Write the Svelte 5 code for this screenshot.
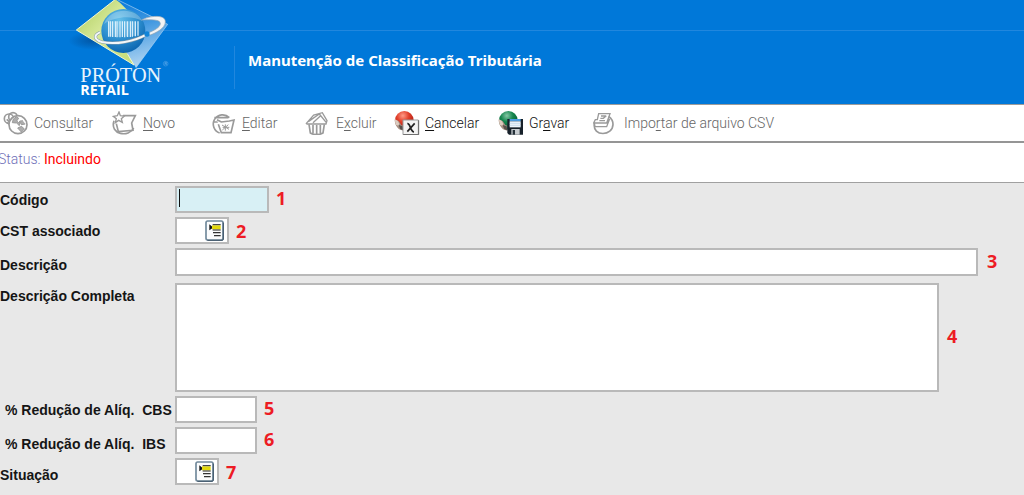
<script>
  let codigo = $state('');
  let cst = $state('');
  let descricao = $state('');
  let completa = $state('');
  let cbs = $state('');
  let ibs = $state('');
  let situacao = $state('');
</script>

{#snippet listIcon()}
  <svg class="list-icon" viewBox="0 0 57 63" aria-hidden="true">
    <rect x="3" y="3" width="51" height="57" rx="5" fill="#fbfcfd" stroke="#71899b" stroke-width="5" />
    <path d="M55 8v49q0 4-4 4H7" fill="none" stroke="#3d5468" stroke-width="3" />
    <path d="M13 13v18l9-6v-5z" fill="#111" />
    <path d="M21 22h26" stroke="#e2d80c" stroke-width="12" />
    <path d="M23 14h24M23 30h24" stroke="#222" stroke-width="3" />
    <path d="M24 38h23M27 47h20" stroke="#333" stroke-width="4" />
  </svg>
{/snippet}

{#snippet ball(id, light, mid, dark)}
  <defs>
    <radialGradient id={id} cx=".42" cy=".25" r=".72">
      <stop offset="0" stop-color={light} />
      <stop offset=".45" stop-color={mid} />
      <stop offset="1" stop-color={dark} />
    </radialGradient>
  </defs>
  <circle cx="31" cy="28" r="28" fill="url(#{id})" />
  <path d="M2 26l12 4 8 12 6 2v15l-13-4Q2 42 2 26z" fill="#a58e81" />
  <path d="M2 24l9 5 5 9-3 6-8-3z" fill="#dccbbf" />
  <path d="M14 42l12 4 2 12-9-3z" fill="#57504b" />
{/snippet}

<main>
  <header>
    <svg class="logo" viewBox="0 0 390 312" role="img" aria-label="Próton Retail">
      <defs>
        <linearGradient id="green" x1="0" y1="0" x2="1" y2="1">
          <stop offset="0" stop-color="#a9c957" />
          <stop offset=".45" stop-color="#d7e99a" />
          <stop offset="1" stop-color="#c2db72" />
        </linearGradient>
        <linearGradient id="sky" x1=".4" y1="0" x2=".6" y2="1">
          <stop offset="0" stop-color="#0f7ddb" />
          <stop offset=".35" stop-color="#3f97e0" />
          <stop offset="1" stop-color="#b9daf4" />
        </linearGradient>
        <radialGradient id="globe" cx=".4" cy=".25" r=".8">
          <stop offset="0" stop-color="#64bfe9" />
          <stop offset=".55" stop-color="#2d8fcf" />
          <stop offset="1" stop-color="#0961ad" />
        </radialGradient>
        <radialGradient id="shade">
          <stop offset="0" stop-color="#034b93" stop-opacity=".7" />
          <stop offset="1" stop-color="#034b93" stop-opacity="0" />
        </radialGradient>
      </defs>
      <ellipse cx="95" cy="122" rx="70" ry="27" fill="url(#shade)" />
      <path d="M49 90L166-2l30 20 40 60-14 117z" fill="url(#green)" />
      <path d="M170-2L323 73 228 203l-28-44 20-110z" fill="url(#sky)" />
      <path d="M170-2L323 73 228 203" fill="none" stroke="#a9d1f3" stroke-width="2" />
      <path d="M166-2L49 90l173 105-20-34" fill="none" stroke="#f3f6cf" stroke-width="3" />
      <circle cx="190" cy="93" r="66" fill="url(#globe)" />
      <path d="M132 72c18-49 93-53 116-8-30-18-80-16-116 8z" fill="#fff" opacity=".25" />
      <path d="M146 64v46M151 64v46M158 64v47M166 64v47M171 64v48M180 64v48M187 64v47M194 64v48M203 64v47M211 64v47M217 64v46M226 64v45M234 64v43" stroke="#e5f5fd" stroke-width="3.500" />
      <path d="M153 64v46M174 64v47M199 64v46M222 64v44" stroke="#d1ecfa" stroke-width="2" opacity=".7" />
      <path d="M120 97c-18 7-20 22 6 29 40 9 98-2 134-23" fill="none" stroke="#8298a8" stroke-width="9" />
      <path d="M120 97c-18 7-20 22 6 29 40 9 98-2 134-23" fill="none" stroke="#f4f7f9" stroke-width="6" />
      <path d="M245 60c20-12 72-19 71 6-1 19-26 32-48 40l-4-7c19-8 35-16 37-27 2-15-31-13-56-12z" fill="#f2f3f4" stroke="#8fa3b2" stroke-width="2" />
      <circle cx="261" cy="102" r="8" fill="#1184d8" />
      <text x="61" y="246" class="brand">PRÓTON</text>
      <text x="61" y="284" class="retail">RETAIL</text>
      <circle cx="317" cy="191" r="7" fill="none" stroke="#5fa9e9" stroke-width="1.500" />
      <path d="M315 195v-8h3c3 0 3 4 0 4h-3m3 0l2 4" fill="none" stroke="#75b5ec" stroke-width="1.500" />
    </svg>
    <h1>Manutenção de Classificação Tributária</h1>
  </header>

  <nav aria-label="Ações">
    <button disabled>
      <svg viewBox="0 0 78 72" aria-hidden="true">
        <circle cx="18" cy="23" r="14" /><circle cx="30" cy="18" r="13" /><path d="M11 25l11 10M24 21l14 12M12 35l13 8" />
        <circle cx="45" cy="41" r="27" fill="#fff" />
        <path d="M31 24l10-7 6 5-6 8 6 5 5-6-3 15-8-8-13-1zM58 27l-6 7 3 7 12-2M44 51l12-5 8 8-9 9z" fill="#adadad" stroke-width="3" />
      </svg><span>Cons<u>u</u>ltar</span>
    </button>
    <button disabled>
      <svg viewBox="0 0 78 72" aria-hidden="true">
        <path d="M33 14h37L59 36l4 22-44 4-6-24" />
        <path d="M6 29c-14 43 46 51 59 22" />
        <path d="M21 3l4 11 12 1-9 8 3 11-11-6-10 7 3-12-9-7 12-2z" fill="#fff" stroke-width="4" />
      </svg><span><u>N</u>ovo</span>
    </button>
    <button disabled>
      <svg viewBox="0 0 78 72" aria-hidden="true">
        <path d="M55 20A28 28 0 1 0 26 66M10 20h42M6 33h16" />
        <path d="M18 26l13 7 24-3 14-3-9 38H31L22 40" fill="#fff" />
        <path d="M33 42l21 13M52 41L34 57M35 49h20M43 40v19" stroke-width="3" />
      </svg><span><u>E</u>ditar</span>
    </button>
    <button disabled>
      <svg viewBox="0 0 78 72" aria-hidden="true">
        <path d="M4 37L26 12 52 5l14 24-3 10H6zM10 32L43 9l21 26M24 35l22-20" stroke-width="4" />
        <path d="M12 40l4 26q18 10 38 0l4-26M24 42v25M35 42v27M46 42v25" />
      </svg><span>E<u>x</u>cluir</span>
    </button>
    <button>
      <svg viewBox="0 0 78 72" aria-hidden="true" class="colored">
        {@render ball('red', '#ff9a86', '#e1402b', '#a8170e')}
        <path d="M27 27h46v44H27z" fill="#f4f4f4" stroke="#999" stroke-width="3" />
        <path d="M74 28v43H28" fill="none" stroke="#666" stroke-width="3" />
        <path d="M40 38c9-2 9 24 20 25M62 37L40 62" fill="none" stroke="#222" stroke-width="5" />
      </svg><span><u>C</u>ancelar</span>
    </button>
    <button>
      <svg viewBox="0 0 78 72" aria-hidden="true" class="colored">
        {@render ball('emerald', '#85c7a4', '#16864f', '#00582f')}
        <path d="M28 24h47v47H33l-5-5z" fill="#17212a" />
        <path d="M35 24h33v7H35z" fill="#4b9ce0" /><path d="M35 31h33v18H35z" fill="#eef5fb" /><path d="M35 37h33M35 43h33" stroke="#b9d2e6" stroke-width="2" />
        <path d="M40 54h25v17H40z" fill="#c7ccd0" /><path d="M44 57h7v14h-7z" fill="#26313a" />
      </svg><span>Gr<u>a</u>var</span>
    </button>
    <button disabled>
      <svg viewBox="0 0 78 72" aria-hidden="true">
        <path d="M4 38c-6 40 56 38 56 2 0-13-6-19-13-24" />
        <path d="M17 8h34L41 36H2l5-10h6zM4 37l2 10h35l9-24M24 15h14M22 22h9l9-8M19 29h17" stroke-width="4" />
      </svg><span>Impo<u>r</u>tar de arquivo CSV</span>
    </button>
  </nav>

  <p class="status">Status: <strong>Incluindo</strong></p>

  <form onsubmit={(e) => e.preventDefault()}>
    <div class="row">
      <label for="codigo">Código</label>
      <span class="box code"><input id="codigo" bind:value={codigo} /><i class="caret"></i></span>
      <b>1</b>
    </div>
    <div class="row picker">
      <label for="cst">CST associado</label>
      <span class="box cst"><input id="cst" bind:value={cst} /><button type="button" aria-label="Listar CST">{@render listIcon()}</button></span>
      <b>2</b>
    </div>
    <div class="row wide low">
      <label for="descricao">Descrição</label>
      <span class="box"><input id="descricao" bind:value={descricao} /></span>
      <b>3</b>
    </div>
    <div class="row tall">
      <label for="completa">Descrição Completa</label>
      <span class="box"><textarea id="completa" bind:value={completa}></textarea></span>
      <b>4</b>
    </div>
    <div class="row">
      <label class="rate" for="cbs">% Redução de Alíq.&nbsp; CBS</label>
      <span class="box percent"><input id="cbs" bind:value={cbs} /></span>
      <b>5</b>
    </div>
    <div class="row low">
      <label class="rate" for="ibs">% Redução de Alíq.&nbsp; IBS</label>
      <span class="box percent"><input id="ibs" bind:value={ibs} /></span>
      <b>6</b>
    </div>
    <div class="row low picker">
      <label for="situacao">Situação</label>
      <span class="box state"><input id="situacao" bind:value={situacao} /><button type="button" aria-label="Listar situações">{@render listIcon()}</button></span>
      <b>7</b>
    </div>
  </form>
</main>

<style>
  :global(body) { margin: 0; background: #e8e8e8; }
  * { box-sizing: border-box; }
  main { font: 14px/16px "Liberation Sans", Arial, sans-serif; overflow-x: hidden; }

  header {
    display: flex;
    height: 105px;
    padding-left: 60px;
    background: linear-gradient(#2187de, #2187de) 0 30px / 100% 1px no-repeat #0078d9;
    border-bottom: 1px solid #9b9b9b;
  }
  .logo { flex: none; width: 130px; height: 104px; }
  .brand { font: 61px "Liberation Serif", serif; fill: #e7f3fd; }
  .retail { font: bold 43px "Open Sans", sans-serif; fill: #fff; }
  h1 {
    margin: 46px 0 0 44px;
    padding: 4px 0 0 13px;
    height: 43px;
    border-left: 1px solid #2187de;
    color: #fff;
    font: bold 15px/20px "Noto Sans", sans-serif;
    white-space: nowrap;
  }

  nav {
    display: grid;
    grid-template-columns: 109px 99px 94px 89px 104px 95px auto;
    padding: 0 3px;
    height: 38px;
    background: #fff;
    border-bottom: 2px solid #959595;
  }
  nav button {
    display: flex;
    align-items: center;
    gap: 5px;
    padding: 0;
    border: 0;
    background: none;
    color: #111;
    font: 14px/18px Roboto, sans-serif;
    font-weight: 300;
    white-space: nowrap;
  }
  nav button:disabled { color: #666; }
  nav svg { flex: none; width: 26px; height: 24px; fill: none; stroke: #9a9a9a; stroke-width: 5px; }
  nav svg.colored { stroke: none; }
  u { text-underline-offset: 2px; }

  .status {
    margin: 0;
    height: 40px;
    padding-top: 7px;
    text-indent: -2px;
    background: #fff;
    border-bottom: 1px solid #a0a0a0;
    color: #6f6fb8;
    font: 14px/18px Roboto, sans-serif;
    font-weight: 300;
  }
  .status strong { color: #f00; font-weight: 400; }

  form { display: flex; flex-direction: column; gap: 4px; padding: 3px 0 9px; }
  .row { display: flex; align-items: center; height: 27px; }
  .row.wide { height: 28px; padding-right: 24px; margin-bottom: 3px; }
  .row.tall { height: 109px; padding-right: 63px; }
  label { flex: none; width: 175px; padding-top: 1px; color: #151515; font-weight: bold; white-space: nowrap; }
  .low label { padding-top: 6px; }
  .tall label { align-self: flex-start; padding-top: 5px; }
  .rate { padding-left: 5px; }
  .box {
    position: relative;
    display: flex;
    align-items: center;
    height: 100%;
    background: #fff;
    border: 2px solid #b9b9b9;
  }
  .wide .box, .tall .box { flex: 1; }
  .code { width: 94px; background: #d8f0f5; }
  .cst { width: 54px; }
  .percent { width: 82px; }
  .state { width: 44px; }
  input, textarea {
    flex: 1;
    min-width: 0;
    height: 100%;
    padding: 0 3px;
    border: 0;
    outline: 0;
    background: transparent;
    font: inherit;
    resize: none;
  }
  .caret { position: absolute; left: 2px; top: 1px; width: 1px; height: 18px; background: #111; }
  .box button { flex: none; margin-right: 3px; padding: 0; border: 0; background: none; }
  .list-icon { display: block; width: 19px; height: 21px; }
  .row b { width: 22px; padding: 0 0 3px 7px; flex: none; color: #ed1c24; font: bold 18px/22px "Open Sans", sans-serif; }
  .picker b { padding-bottom: 0; }
  .wide b { padding-left: 9px; }
  .tall b { padding-left: 8px; }
</style>
